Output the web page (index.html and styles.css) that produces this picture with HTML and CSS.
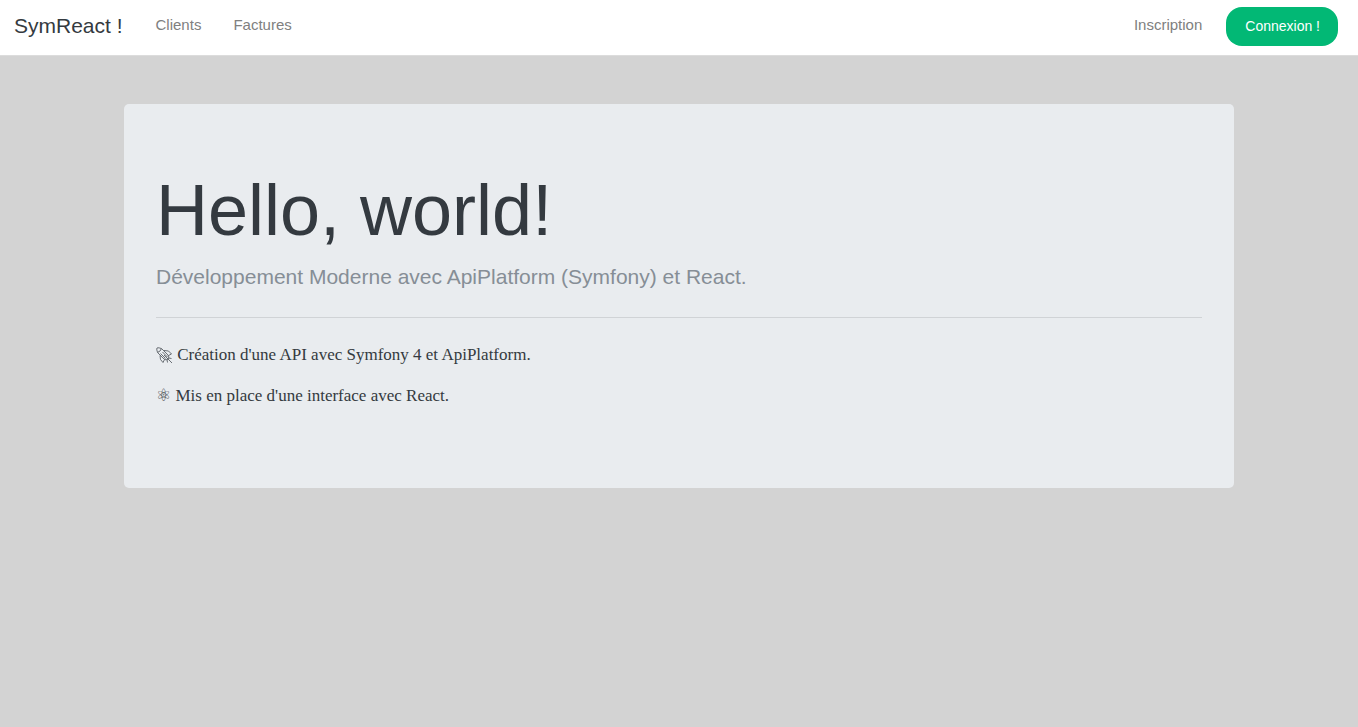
FILE: index.html
```html
<!DOCTYPE html>
<html lang="fr">
<head>
<meta charset="utf-8">
<title>SymReact !</title>
<link rel="stylesheet" href="styles.css">
</head>
<body>
<nav class="navbar">
  <a class="brand" href="#">SymReact !</a>
  <ul class="nav nav-main">
    <li><a class="nav-link" href="#">Clients</a></li>
    <li><a class="nav-link" href="#">Factures</a></li>
  </ul>
  <ul class="nav nav-user">
    <li><a class="nav-link" href="#">Inscription</a></li>
    <li><a class="btn" href="#">Connexion !</a></li>
  </ul>
</nav>
<main class="container">
  <section class="jumbotron">
    <h1 class="title">Hello, world!</h1>
    <p class="lead">Développement Moderne avec ApiPlatform (Symfony) et React.</p>
    <hr class="rule">
    <p class="text"><svg class="rocket" viewBox="0 0 17 17" aria-hidden="true">
      <path d="M1 1C0.500 2 0.800 4 2 6L8 12C9.500 13 11 13 12 12C13 11 13 9.500 12 8L6 2C4 0.800 2 0.500 1 1Z"/>
      <path d="M1.500 5C3.500 5 5 3.500 5 1.500M4.500 6.500L9.500 11.500M6.500 5L11.500 10"/>
      <path d="M8 3.500L12.500 4L15.500 7L12.500 8.500M4 8.500L4.500 12.500L7 15.500L8.500 12.500"/>
      <path d="M8 8L16 16M11 12.500L11.500 15.500M12.500 11L15.500 11.500"/>
    </svg> Création d'une API avec Symfony 4 et ApiPlatform.</p>
    <p class="text"><span class="atom">⚛</span> Mis en place d'une interface avec React.</p>
  </section>
</main>
</body>
</html>
```

FILE: styles.css
```css
* {
  box-sizing: border-box;
}

body {
  margin: 0;
  background: #d3d3d3;
  color: #343a40;
  font-family: "Liberation Serif", "DejaVu Sans", serif;
  font-size: 17px;
  line-height: 25px;
}

.navbar {
  display: flex;
  align-items: center;
  height: 56px;
  padding: 0 20px 2px 14px;
  background: #fff;
  border-bottom: 1px solid #dcdcdc;
  font-family: "Liberation Sans", sans-serif;
}

.brand {
  margin-right: 17px;
  padding-bottom: 2px;
  color: #343a40;
  font-size: 21px;
  text-decoration: none;
}

.nav {
  display: flex;
  align-items: center;
  margin: 0;
  padding: 0;
  list-style: none;
}

.nav-main {
  flex: 1;
}

.nav-user {
  gap: 8px;
}

.nav-link {
  display: block;
  padding: 0 16px 4px;
  color: #808080;
  font-size: 15px;
  text-decoration: none;
}

.btn {
  display: block;
  padding: 7px 18px 7px 19px;
  border-radius: 16px;
  background: #02b875;
  color: #fff;
  font-size: 14px;
  text-decoration: none;
}

.container {
  max-width: 1110px;
  margin: 48px auto 0;
}

.jumbotron {
  padding: 64px 32px;
  border-radius: 5px;
  background: #e9ecef;
}

.title {
  margin: 0 0 9px;
  font-family: "Liberation Sans", sans-serif;
  font-size: 72px;
  font-weight: 400;
  line-height: 84px;
}

.lead {
  margin: 0 0 25px;
  color: #868e96;
  font-family: "Liberation Sans", sans-serif;
  font-size: 21px;
  line-height: 31px;
}

.rule {
  margin: 24px 0;
  border: 0;
  border-top: 1px solid #d0d3d6;
}

.text {
  margin: 0 0 16px;
}

.rocket {
  width: 17px;
  height: 17px;
  vertical-align: -4px;
  fill: none;
  stroke: currentColor;
  stroke-width: 0.7;
}

.atom {
  font-family: "DejaVu Sans", sans-serif;
  line-height: 1;
}
```
